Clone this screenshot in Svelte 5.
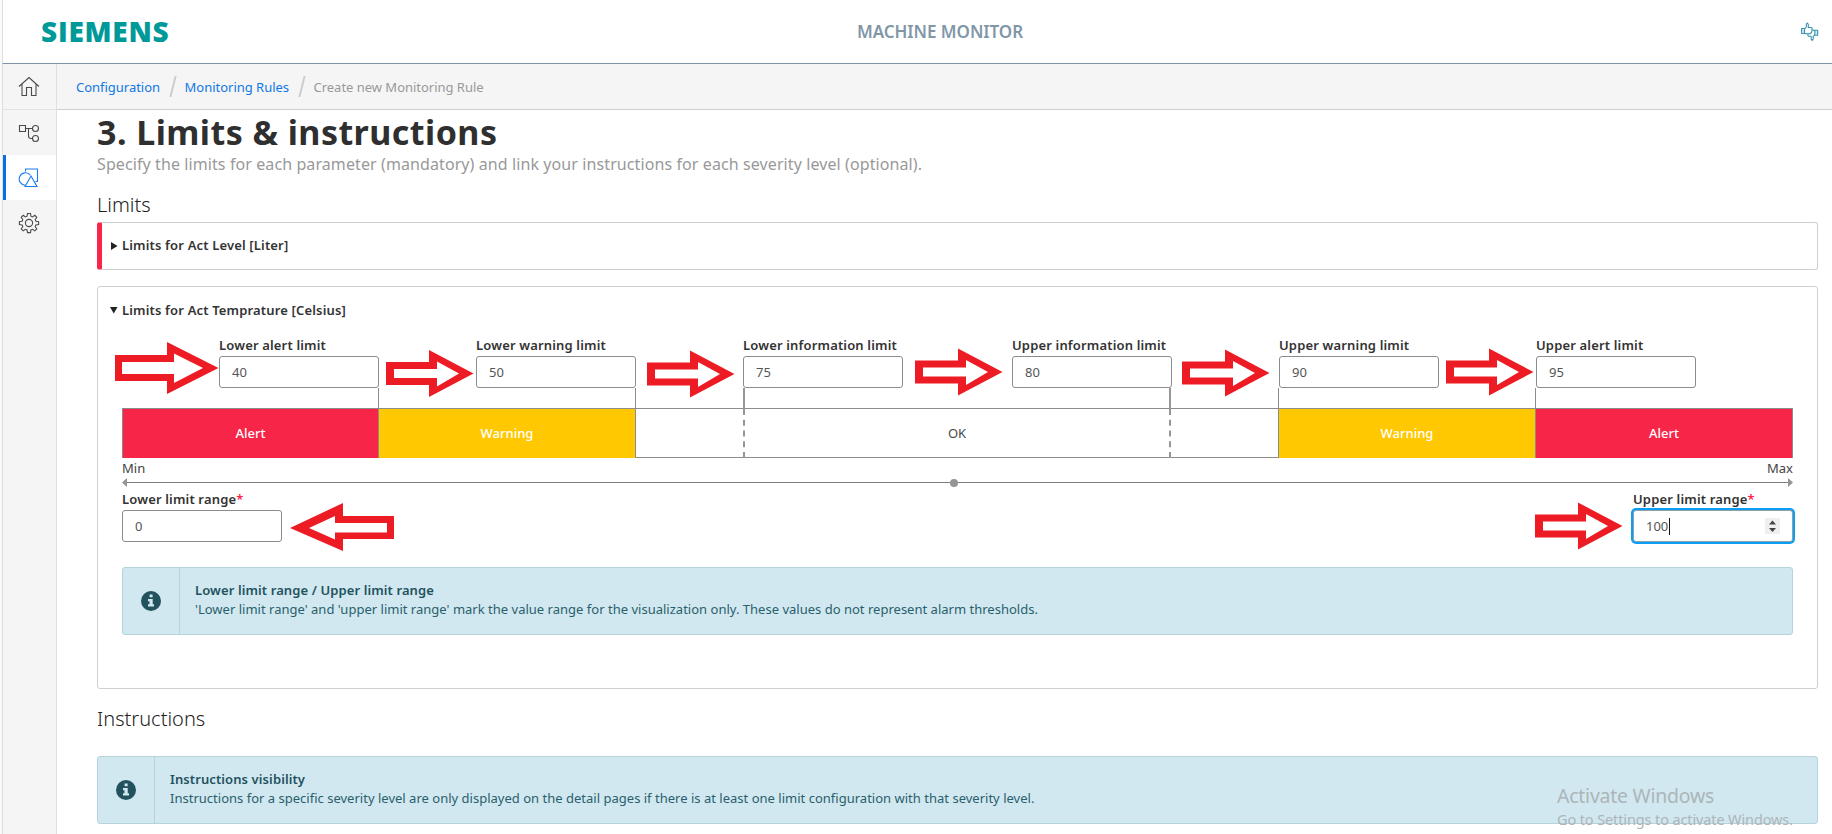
<script>
  const fields = [
    { label: 'Lower alert limit', value: 40, link: 'end' },
    { label: 'Lower warning limit', value: 50, link: 'end' },
    { label: 'Lower information limit', value: 75, link: 'start thick' },
    { label: 'Upper information limit', value: 80, link: 'end thick' },
    { label: 'Upper warning limit', value: 90, link: 'start' },
    { label: 'Upper alert limit', value: 95, link: 'start' }
  ];
  const segments = [
    { text: 'Alert', kind: 'alert' },
    { text: 'Warning', kind: 'warning' },
    { text: '', kind: 'info' },
    { text: 'OK', kind: 'ok' },
    { text: '', kind: 'info plain' },
    { text: 'Warning', kind: 'warning' },
    { text: 'Alert', kind: 'alert' }
  ];
  const arrows = [
    { x: 386, y: 350 }, { x: 647, y: 350.5 }, { x: 915, y: 348.5 },
    { x: 1182, y: 349.5 }, { x: 1446, y: 348.5 }, { x: 1535, y: 502.5 }
  ];
</script>

{#snippet info(title, body)}
  <div class="notice">
    <div class="mark">
      <svg width="20" height="20" viewBox="0 0 20 20">
        <circle cx="10" cy="10" r="10" fill="#23525f" />
        <path d="M8.600 3.600h3v2.600h-3zM7 8h4.700v5.300H13V15.600H7v-2.300h1.500V10.200H7z" fill="#d1e8ef" />
      </svg>
    </div>
    <div class="words">
      <strong>{title}</strong>
      <span>{body}</span>
    </div>
  </div>
{/snippet}

<div class="app">
  <header>
    <div class="logo">SIEMENS</div>
    <div class="product">MACHINE MONITOR</div>
    <svg class="feedback" width="18" height="20" viewBox="0 0 18 20" fill="none" stroke="#3a93b0" stroke-width="1.1" stroke-linejoin="round">
      <path d="M3.500 7.200 5.300 5V2.200L6.300 1l1 1.300V5.500h3.200l.6 1-.5 4-1.600 1.300H4.800l-1.300-.6z" />
      <path d="M.600 6.500h2.900v5H.600zM13.800 8.300h2.900v5h-2.900z" fill="#d5eaf1" />
      <path d="M13.800 12.700l-1.600 1.900v2.600l-1 1.300-1-1.400v-2.800H7.400l-.6-1.100.3-1.300M13.800 8.700l-1.200-.6h-1.300" />
    </svg>
  </header>

  <div class="body">
    <nav>
      <a class="item first" href="#home" aria-label="Home">
        <svg width="22" height="22" viewBox="0 0 22 22"><path d="M1 10.500 11 1.500l10 9M4 8v11.500h4.500v-8h5v8H18V8" /></svg>
      </a>
      <a class="item" href="#assets" aria-label="Assets">
        <svg width="22" height="22" viewBox="0 0 22 22"><path d="M1.500 3.500h6v6h-6zM7.500 6.500h7M10.500 6.500v7.500q0 2.500 2.500 2.500h1.500" /><circle cx="17.500" cy="6.500" r="3" /><circle cx="17.500" cy="16.500" r="3" /></svg>
      </a>
      <a class="item active" href="#rules" aria-label="Rules">
        <svg width="22" height="22" viewBox="0 0 22 22"><path d="M7.500 4.500V2h12v12.500h-2M13 9l6 10.500H7zM8 18.200A6.200 6.200 0 1 1 12.300 8.200" /></svg>
      </a>
      <a class="item" href="#settings" aria-label="Settings">
        <svg width="22" height="22" viewBox="0 0 22 22"><circle cx="11" cy="11" r="3.600" /><path d="M9.500 1.500h3l.4 2.700 1.700.7 2.200-1.600 2 2-1.600 2.200.7 1.700 2.700.4v3l-2.700.4-.7 1.700 1.600 2.200-2 2-2.200-1.600-1.700.7-.4 2.600h-3l-.4-2.600-1.700-.7-2.200 1.600-2-2 1.600-2.200-.7-1.700-2.700-.4v-3l2.700-.4.7-1.700-1.600-2.200 2-2 2.200 1.600 1.700-.7z" /></svg>
      </a>
    </nav>

    <div class="page">
      <div class="crumbs">
        <a href="#configuration">Configuration</a>
        <i></i>
        <a href="#monitoring">Monitoring Rules</a>
        <i></i>
        <span>Create new Monitoring Rule</span>
      </div>

      <main>
        <h1>3. Limits &amp; instructions</h1>
        <p class="lead">Specify the limits for each parameter (mandatory) and link your instructions for each severity level (optional).</p>
        <h2>Limits</h2>

        <section class="panel closed">
          <h3><svg width="7" height="8" viewBox="0 0 7 8"><path d="M0 0l6.500 4L0 8z" /></svg><span>Limits for Act Level [Liter]</span></h3>
        </section>

        <section class="panel open">
          <h3><svg width="8" height="7" viewBox="0 0 8 7"><path d="M0 0h7.500L3.750 6.500z" /></svg><span>Limits for Act Temprature [Celsius]</span></h3>

          <div class="fields">
            {#each fields as f}
              <div class="field {f.link}">
                <div class="label">{f.label}</div>
                <div class="input">{f.value}</div>
              </div>
            {/each}
          </div>

          <div class="bar">
            {#each segments as s}
              <div class={s.kind}>{s.text}</div>
            {/each}
          </div>

          <div class="ends"><span>Min</span><span>Max</span></div>
          <svg class="axis" width="1671" height="10" viewBox="0 0 1671 10" fill="#949494">
            <path d="M4 4h1663v1H4z" fill="#7c7c7c" />
            <path d="M0 4.500 5 0v9zM1671 4.500 1666 0v9z" />
            <circle cx="832" cy="5" r="4" />
          </svg>

          <div class="ranges">
            <div class="field">
              <div class="label">Lower limit range<u>*</u></div>
              <div class="input">0</div>
            </div>
            <div class="field">
              <div class="label">Upper limit range<u>*</u></div>
              <div class="input focus">
                <span>100</span><s></s>
                <svg width="15" height="16" viewBox="0 0 15 16"><path d="M0 0h15v16H0z" fill="#efefef" /><path d="M4 6.500 7.500 2.500l3.500 4zM4 10l3.500 4L11 10z" fill="#444" /></svg>
              </div>
            </div>
          </div>

          {@render info('Lower limit range / Upper limit range', "'Lower limit range' and 'upper limit range' mark the value range for the visualization only. These values do not represent alarm thresholds.")}
        </section>

        <div class="instructions">
          <h2>Instructions</h2>
          {@render info('Instructions visibility', 'Instructions for a specific severity level are only displayed on the detail pages if there is at least one limit configuration with that severity level.')}
        </div>
      </main>
    </div>
  </div>

  <svg class="marks" width="1832" height="834" viewBox="0 0 1832 834" fill="#ed1c24" fill-rule="evenodd">
    <path d="M115 355h52v-13l51.500 26-51.500 26v-13h-52zM122 362v12h52v9l29-15-29-14.500V362z" />
    {#each arrows as a}
      <path transform="translate({a.x} {a.y})" d="M0 12h43V0l44.500 23.500L43 47V35H0zM8 19v9h43v8.500L73 23.500 51 11.500V19z" />
    {/each}
    <path d="M394 516h-51v-13l-53 25 53 23v-12h51zM387 523v9.500h-52v7L309 528l26-12v7z" />
  </svg>
  <div class="watermark"><div>Activate Windows</div><p>Go to Settings to activate Windows.</p></div>
</div>

<style>
  :global(body) { background: #fff; overflow: hidden; }
  .app { position: relative; box-sizing: border-box; width: 1832px; height: 834px; overflow: hidden; border-left: 2px solid #fafafa; font-family: 'Noto Sans', sans-serif; font-size: 13px; color: #333; display: flex; flex-direction: column; }
  .app :global(*) { box-sizing: border-box; }
  h1, h2, h3, p { margin: 0; }
  a { text-decoration: none; }
  header { height: 64px; flex: none; border-left: 1px solid #dedede; border-bottom: 1px solid #7f94a6; display: grid; grid-template-columns: 1fr auto 1fr; align-items: center; padding: 0 13px 0 38px; }
  .logo { color: #009999; font: 800 28px/60px 'Open Sans', sans-serif; letter-spacing: 0.75px; height: 62px; }
  .product { color: #8197a8; font-size: 17px; font-weight: 600; letter-spacing: -0.05px; transform: translateX(10px); }
  .feedback { justify-self: end; }
  .body { display: flex; flex: 1; }
  nav { width: 55px; flex: none; background: #f5f5f5; border-left: 1px solid #dedede; border-right: 1px solid #e0e0e0; }
  .item { display: flex; height: 45px; align-items: center; padding-left: 15px; }
  .item.first { height: 46px; border-bottom: 1px solid #e2e2e2; }
  .item svg { fill: none; stroke: #4b4b4b; stroke-width: 1.1; }
  .item.active { background: #fff; border-left: 3px solid #0a6ee6; padding-left: 12px; }
  .item.active svg { stroke: #1a7cf0; }
  .page { flex: 1; min-width: 0; }
  .crumbs { height: 46px; background: #f5f5f5; border-bottom: 1px solid #d0d0d0; display: flex; align-items: center; padding-left: 19px; color: #999; letter-spacing: -0.02px; }
  .crumbs a { color: #0f78e6; }
  .crumbs i { width: 1.5px; height: 21px; background: #ccc; margin: 0 11.5px; transform: skewX(-14deg); }
  main { padding: 0 14px 0 40px; }
  h1 { font-size: 34px; line-height: 44px; font-weight: 700; color: #2f2f2f; letter-spacing: 0.45px; }
  .lead { font-size: 16px; line-height: 20px; height: 22px; color: #999; letter-spacing: 0.095px; }
  h2 { font-size: 20px; line-height: 30px; font-weight: 300; margin-top: 14px; color: #222; }
  .panel { border: 1px solid #cfcfcf; border-radius: 3px; margin-top: 2px; }
  .closed { height: 48px; border-left: 5px solid #f9254a; padding-left: 9px; }
  .open { height: 403px; margin-top: 16px; padding: 0 24px; }
  h3 { font-size: 13px; font-weight: 600; line-height: 45px; display: flex; align-items: center; letter-spacing: 0.16px; }
  h3 svg { margin-right: 4px; fill: #222; }
  .open h3 { margin-left: -12px; line-height: 46px; }
  .fields { display: grid; grid-template-columns: 97px 160px 97px 160px 107px 160px 109px 160px 107px 160px 97px 160px; }
  .fields .field { grid-row: 1; }
  .fields .field:nth-child(1) { grid-column: 2; }
  .fields .field:nth-child(2) { grid-column: 4; }
  .fields .field:nth-child(3) { grid-column: 6; }
  .fields .field:nth-child(4) { grid-column: 8; }
  .fields .field:nth-child(5) { grid-column: 10; }
  .fields .field:nth-child(6) { grid-column: 12; }
  .field { position: relative; width: 160px; }
  .label { font-weight: 600; letter-spacing: 0.16px; line-height: 25px; height: 23px; white-space: nowrap; }
  .ranges .label { line-height: 23px; height: 22px; }
  .end::after, .start::after { content: ''; position: absolute; top: 55px; height: 20px; width: 1px; background: #8c8c8c; }
  .end::after { right: 0; }
  .start::after { left: -1px; }
  .thick::after { width: 2px; background: #969696; height: 26px; }
  .end.thick::after { right: 1px; }
  .start.thick::after { left: 0; }
  u { color: #f9254a; text-decoration: none; }
  .input { height: 32px; border: 1px solid #8c8c8c; border-radius: 3px; background: #fff; padding: 0 12px; line-height: 31px; color: #555; }
  .input.focus { display: flex; align-items: center; border-color: #8fa0ad; box-shadow: 0 0 0 2px #0a9ff5; }
  .focus s { width: 1px; height: 17px; background: #111; margin-left: 1px; }
  .focus svg { margin-left: auto; }
  .bar { display: grid; grid-template-columns: 256px 257px 108px 428px 107px 257px 258px; height: 50px; margin-top: 20px; border-top: 1px solid #8c8c8c; border-bottom: 1px solid #8c8c8c; }
  .bar > div { border-left: 1px solid #8c8c8c; text-align: center; line-height: 49px; color: #4a4a4a; }
  .bar > .alert { background: #f72548; color: #fff; font-weight: 500; }
  .alert:last-child { border-right: 1px solid #8c8c8c; }
  .bar > .warning { background: #ffc800; color: #fff; font-weight: 500; }
  .bar > .plain { border-left: 0; }
  .bar > .ok { border-left: 2px dashed #969696; border-right: 2px dashed #969696; }
  .ends { display: flex; justify-content: space-between; line-height: 20px; color: #444; }
  .axis { display: block; }
  .ranges { display: flex; justify-content: space-between; }
  .notice { display: flex; height: 68px; background: #d1e8f0; border: 1px solid #b5d3dc; border-radius: 3px; color: #2a5f6c; margin-top: 25px; }
  .mark { width: 57px; display: grid; place-items: center; border-right: 1px solid #b5d3dc; }
  .words { padding: 12.5px 15px; display: flex; flex-direction: column; line-height: 19px; letter-spacing: 0.01px; }
  .words strong { font-weight: 600; letter-spacing: 0.1px; color: #23525f; }
  .instructions h2 { margin-top: 15px; }
  .instructions .notice { margin-top: 22px; }
  .marks { position: absolute; left: -2px; top: 0; }
  .watermark { position: absolute; left: 1555px; top: 782px; color: #adb5b8; white-space: nowrap; }
  .watermark div { font-size: 19.5px; line-height: 28px; letter-spacing: -0.25px; }
  .watermark p { font-size: 14.5px; line-height: 18px; letter-spacing: -0.12px; }
</style>
